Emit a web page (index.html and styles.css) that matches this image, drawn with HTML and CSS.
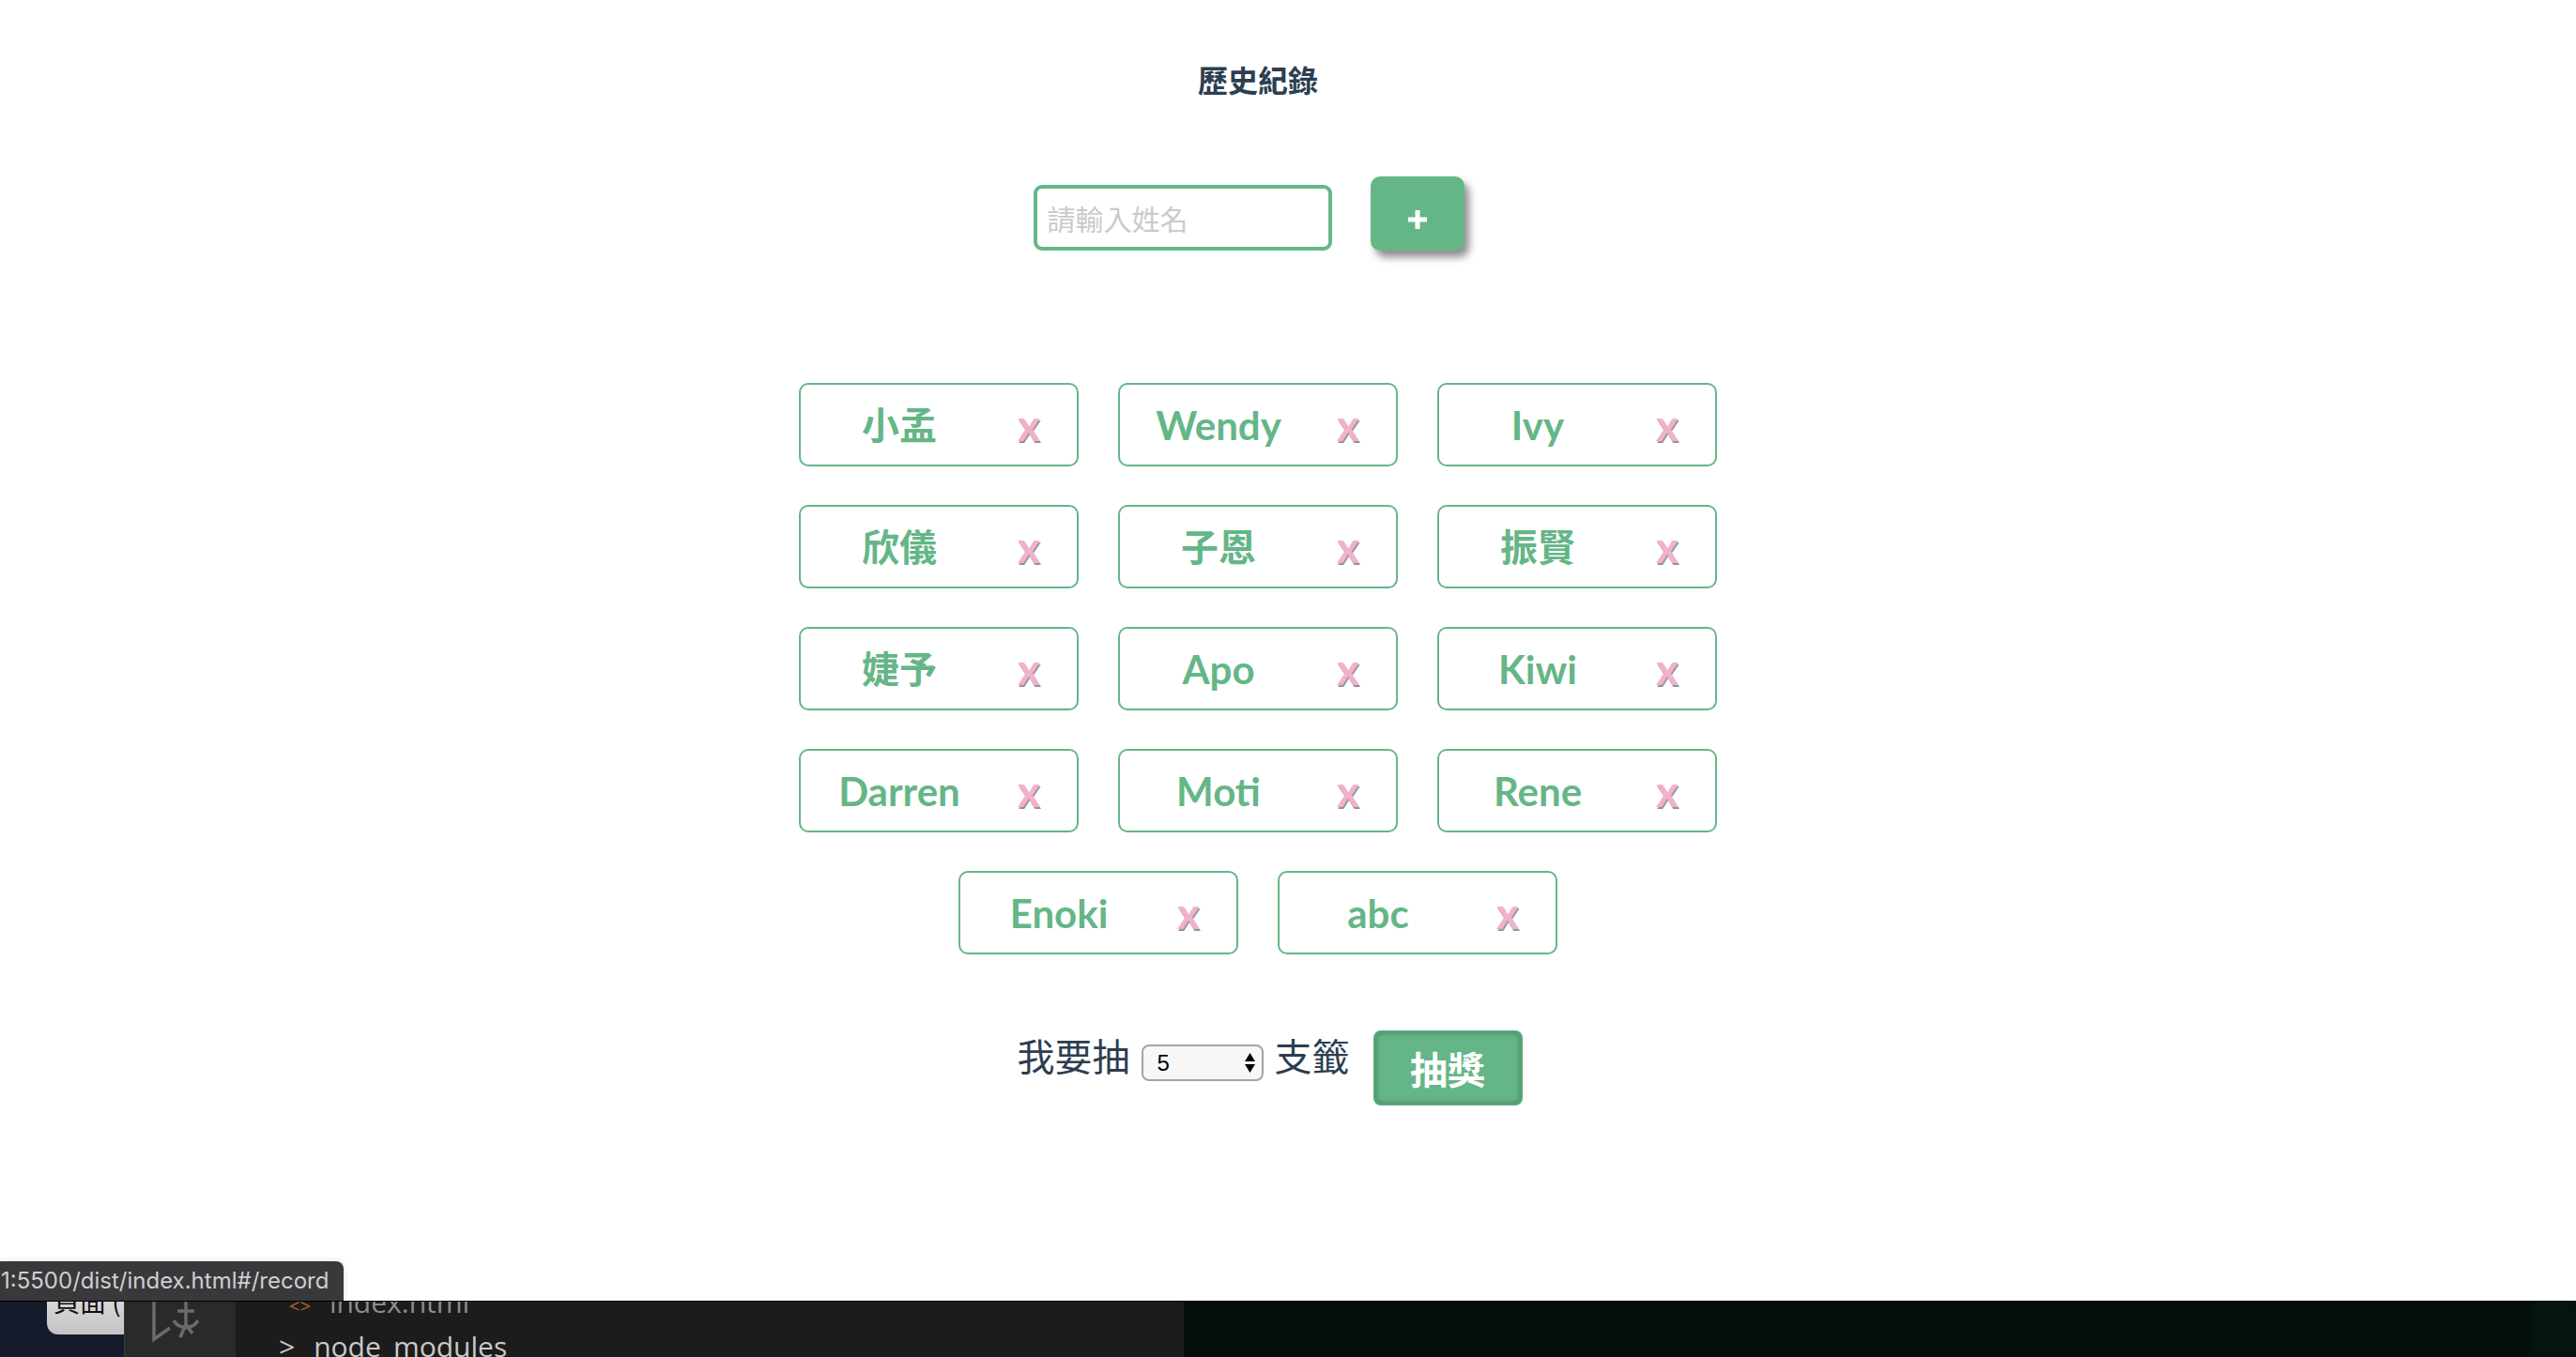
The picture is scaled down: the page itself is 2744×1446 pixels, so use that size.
FILE: index.html
```html
<!DOCTYPE html>
<html lang="zh-Hant">
<head>
<meta charset="utf-8">
<title>歷史紀錄</title>
<link rel="stylesheet" href="styles.css">
</head>
<body>
<div class="browser">
  <div class="app">
    <h1 class="title">歷史紀錄</h1>
    <div class="add-row">
      <input class="name-input" type="text" placeholder="請輸入姓名">
      <button class="add-btn" type="button" aria-label="新增">
        <svg class="plus" width="22" height="22" viewBox="0 0 22 22"><path d="M11 1v20M1 11h20" stroke="#fff" stroke-width="5"/></svg>
      </button>
    </div>
    <ul class="cards">
      <li class="card"><span class="name cjk">小孟</span><span class="del">x</span></li>
      <li class="card"><span class="name">Wendy</span><span class="del">x</span></li>
      <li class="card"><span class="name">Ivy</span><span class="del">x</span></li>
      <li class="card"><span class="name cjk">欣儀</span><span class="del">x</span></li>
      <li class="card"><span class="name cjk">子恩</span><span class="del">x</span></li>
      <li class="card"><span class="name cjk">振賢</span><span class="del">x</span></li>
      <li class="card"><span class="name cjk">婕予</span><span class="del">x</span></li>
      <li class="card"><span class="name">Apo</span><span class="del">x</span></li>
      <li class="card"><span class="name">Kiwi</span><span class="del">x</span></li>
      <li class="card"><span class="name">Darren</span><span class="del">x</span></li>
      <li class="card"><span class="name">Moti</span><span class="del">x</span></li>
      <li class="card"><span class="name">Rene</span><span class="del">x</span></li>
      <li class="card"><span class="name">Enoki</span><span class="del">x</span></li>
      <li class="card"><span class="name">abc</span><span class="del">x</span></li>
    </ul>
    <div class="draw-row">
      <span class="label">我要抽</span>
      <div class="select-wrap">
        <select class="count"><option>5</option></select>
        <svg class="arrows" width="11" height="21" viewBox="0 0 11 21"><path d="M5.5 0L11 9H0Z M0 12H11L5.5 21Z" fill="#000"/></svg>
      </div>
      <span class="label">支籤</span>
      <button class="draw-btn" type="button">抽獎</button>
    </div>
  </div>
  <div class="status">1:5500/dist/index.html#/record</div>
</div>
<div class="desktop">
  <div class="d-navy"><div class="pill"><span>頁面 (</span></div></div>
  <div class="d-side">
    <svg class="run-icon" width="60" height="46" viewBox="0 0 60 46"><path d="M3 -8V40L20 28" fill="none" stroke="#6b6b6b" stroke-width="3.5"/><path d="M24 20C30 30 44 30 50 20M37 -4V24M28 10H46M37 24L31 38M37 24L44 34" fill="none" stroke="#6b6b6b" stroke-width="3.5"/></svg>
  </div>
  <div class="d-tree">
    <div class="tree-line first"><span class="chev">&lt;&gt;</span><span>index.html</span></div>
    <div class="tree-line second"><span class="caret">&gt;</span><span>node_modules</span></div>
  </div>
  <div class="d-green"></div>
  <div class="d-edge"></div>
</div>
</body>
</html>
```

FILE: styles.css
```css
html, body {
  margin: 0;
  padding: 0;
}

body {
  width: 2744px;
  height: 1446px;
  overflow: hidden;
  background: #ffffff;
  font-family: "Noto Sans CJK TC", sans-serif;
}

.browser {
  position: relative;
  height: 1386px;
  background: #ffffff;
}

.app {
  width: 2680px;
  display: flex;
  flex-direction: column;
  align-items: center;
  color: #2c3e50;
}

.title {
  margin: 64px 0 0;
  font: 700 32px/40px "Noto Sans CJK TC", sans-serif;
  color: #2c3e50;
}

.add-row {
  margin-top: 84px;
  display: flex;
  align-items: flex-end;
  gap: 41px;
  padding-right: 20px;
}

.name-input {
  box-sizing: border-box;
  width: 318px;
  height: 70px;
  border: 4px solid #65b687;
  border-radius: 9px;
  padding: 0 11px;
  font: 400 30px "Noto Sans CJK TC", sans-serif;
  color: #2c3e50;
  outline: none;
  background: #fff;
}

.name-input::placeholder {
  color: #cacaca;
}

.add-btn {
  width: 100px;
  height: 79px;
  border: none;
  border-radius: 10px;
  background: #65b687;
  box-shadow: 5px 7px 9px rgba(0, 0, 0, 0.45);
  display: flex;
  align-items: center;
  justify-content: center;
  padding: 0;
}

.plus {
  display: block;
  margin-top: 12px;
}

.cards {
  list-style: none;
  margin: 141px 0 0;
  padding: 0;
  width: 1020px;
  display: flex;
  flex-wrap: wrap;
  justify-content: center;
}

.card {
  box-sizing: border-box;
  width: 298px;
  height: 89px;
  margin: 0 21px 41px;
  border: 2px solid #65b687;
  border-radius: 10px;
  display: flex;
  align-items: center;
}

.name {
  width: 210px;
  text-align: center;
  font: 700 42px/48px Lato, "Noto Sans CJK TC", sans-serif;
  color: #65b687;
}

.name.cjk {
  font-size: 40px;
}

.del {
  padding-left: 21px;
  font: 700 46px/46px Lato, sans-serif;
  color: #f2b1ca;
  text-shadow: 1px 2px 0 rgba(110, 110, 110, 0.75);
}

.draw-row {
  margin-top: 39px;
  display: flex;
  align-items: flex-start;
  padding-left: 25px;
}

.label {
  margin-top: 3px;
  font: 400 40px/48px "Noto Sans CJK TC", sans-serif;
  color: #2c3e50;
}

.select-wrap {
  position: relative;
  width: 130px;
  height: 39px;
  margin: 16px 12px 0;
}

.count {
  appearance: none;
  -webkit-appearance: none;
  box-sizing: border-box;
  width: 130px;
  height: 39px;
  border: 2px solid #a4a4a4;
  border-radius: 8px;
  background: #f7f7f7;
  padding: 0 0 0 15px;
  font: 400 24px "Liberation Sans", sans-serif;
  color: #000;
}

.arrows {
  position: absolute;
  left: 110px;
  top: 9px;
}

.draw-btn {
  box-sizing: border-box;
  width: 159px;
  height: 80px;
  margin: 1px 0 0 25px;
  border: 2px solid #5ba77b;
  border-radius: 8px;
  background: #65b687;
  box-shadow: inset 0 0 6px rgba(0, 0, 0, 0.35);
  color: #ffffff;
  font: 700 40px/1 "Noto Sans CJK TC", sans-serif;
  padding: 0;
}

.status {
  position: absolute;
  left: 0;
  bottom: 0;
  box-sizing: border-box;
  width: 366px;
  height: 42px;
  padding-left: 1px;
  background: #39393c;
  border-top-right-radius: 8px;
  box-shadow: 0 0 6px rgba(0, 0, 0, 0.15);
  color: #cfcfcf;
  font: 400 24px/42px Inter, sans-serif;
  white-space: nowrap;
  overflow: hidden;
}

.desktop {
  display: flex;
  height: 60px;
  border-top: 1px solid #000;
  box-sizing: border-box;
}

.d-navy {
  position: relative;
  width: 132px;
  background: #151b2b;
  overflow: hidden;
}

.pill {
  position: absolute;
  left: 50px;
  top: -20px;
  width: 100px;
  height: 55px;
  border-radius: 0 0 0 12px;
  background: linear-gradient(#e2e2e2, #c4c4c4);
  overflow: hidden;
}

.pill span {
  position: absolute;
  left: 7px;
  top: 4px;
  font: 400 28px/30px "Noto Sans CJK TC", sans-serif;
  color: #111;
}

.d-side {
  width: 118px;
  background: #2a2a2a;
  border-left: 1px solid #3a3a3a;
}

.run-icon {
  display: block;
  margin: 0 0 0 28px;
}

.d-tree {
  width: 1010px;
  background: #1c1c1c;
  color: #8d8d8d;
  font: 400 30px/1 "Open Sans", sans-serif;
  overflow: hidden;
}

.tree-line {
  display: flex;
  align-items: baseline;
  white-space: nowrap;
}

.tree-line.first {
  margin: -14px 0 0 57px;
  gap: 20px;
}

.tree-line.second {
  margin: 17px 0 0 46px;
  gap: 20px;
  color: #c9c9c9;
}

.chev {
  color: #b5682e;
  font-size: 20px;
}

.d-green {
  flex: 1;
  background: #040e0b;
}

.d-edge {
  width: 52px;
  background: #06140f;
  box-shadow: inset 3px 0 4px rgba(0, 0, 0, 0.4);
}
```
